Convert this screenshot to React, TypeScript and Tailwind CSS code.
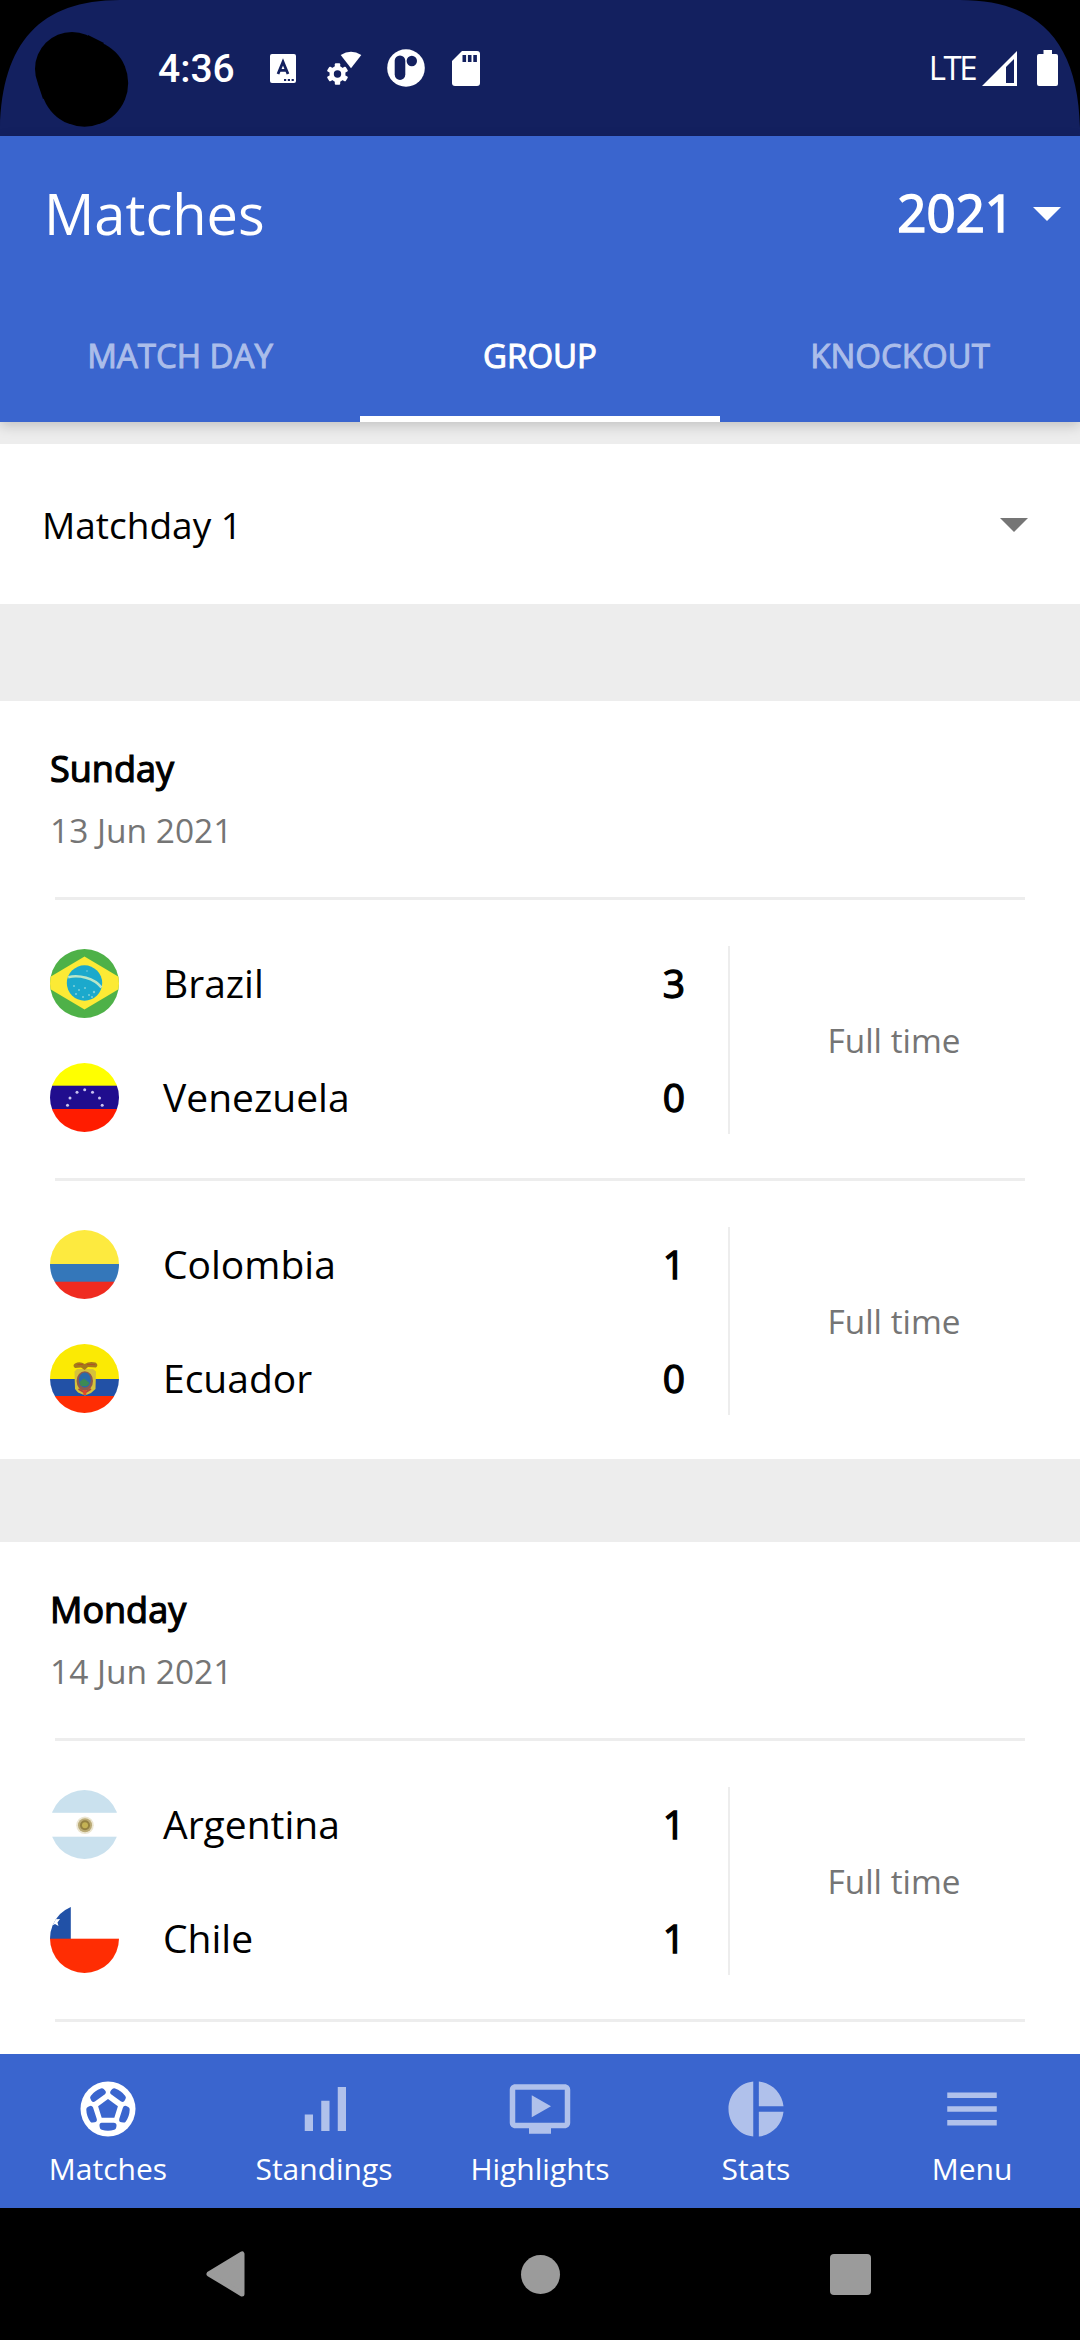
import React, { useState } from 'react'

type FlagName = 'brazil' | 'venezuela' | 'colombia' | 'ecuador' | 'argentina' | 'chile'

interface Team {
  name: string
  flag: FlagName
  score: number
}

interface Match {
  home: Team
  away: Team
  status: string
}

interface Day {
  weekday: string
  date: string
  matches: Match[]
}

const days: Day[] = [
  {
    weekday: 'Sunday',
    date: '13 Jun 2021',
    matches: [
      {
        home: { name: 'Brazil', flag: 'brazil', score: 3 },
        away: { name: 'Venezuela', flag: 'venezuela', score: 0 },
        status: 'Full time',
      },
      {
        home: { name: 'Colombia', flag: 'colombia', score: 1 },
        away: { name: 'Ecuador', flag: 'ecuador', score: 0 },
        status: 'Full time',
      },
    ],
  },
  {
    weekday: 'Monday',
    date: '14 Jun 2021',
    matches: [
      {
        home: { name: 'Argentina', flag: 'argentina', score: 1 },
        away: { name: 'Chile', flag: 'chile', score: 1 },
        status: 'Full time',
      },
    ],
  },
]

const flagArt: Record<FlagName, React.ReactNode> = {
  brazil: (
    <>
      <rect width="69" height="69" fill="#4eb148" />
      <path d="M34.5 7.5 79 34 34.5 60.5 -10 34Z" fill="#fcea35" />
      <circle cx="34.5" cy="34" r="17.7" fill="#1ba9cc" />
      <path d="M18.2 28.2C29 25.5 44 29 51.5 38.5" fill="none" stroke="#b9e6c8" strokeWidth="2.6" />
      <g fill="#7fd0da">
        <circle cx="24" cy="37" r="1" />
        <circle cx="29" cy="41" r="1" />
        <circle cx="26" cy="45" r="1" />
        <circle cx="35" cy="39" r="1" />
        <circle cx="39" cy="46" r="1" />
        <circle cx="44" cy="43" r="1.2" />
        <circle cx="42" cy="48" r="1" />
        <circle cx="33" cy="48" r="1" />
        <circle cx="37" cy="22" r=".8" />
      </g>
    </>
  ),
  venezuela: (
    <>
      <rect width="69" height="23" fill="#ffff00" />
      <rect y="22.7" width="69" height="23.5" fill="#200d8e" />
      <rect y="46" width="69" height="23" fill="#ff1c00" />
      <g fill="#c9c3ee">
        <circle cx="17.5" cy="42.3" r="1.5" />
        <circle cx="20" cy="35" r="1.5" />
        <circle cx="27" cy="29.3" r="1.5" />
        <circle cx="34.7" cy="26.7" r="1.5" />
        <circle cx="42.5" cy="29.3" r="1.5" />
        <circle cx="49.5" cy="35" r="1.5" />
        <circle cx="52.2" cy="42.3" r="1.5" />
      </g>
    </>
  ),
  colombia: (
    <>
      <rect width="69" height="34" fill="#fdea3f" />
      <rect y="34" width="69" height="18" fill="#3477ba" />
      <rect y="51.7" width="69" height="18" fill="#ef2b20" />
    </>
  ),
  ecuador: (
    <>
      <rect width="69" height="35" fill="#fbea04" />
      <rect y="35" width="69" height="17.5" fill="#2251a6" />
      <rect y="52" width="69" height="17" fill="#ff2d03" />
      <path d="M24.5 27.5 27 25H43L46 27.5 45.5 45 41 49 35 51.5 28 48.5 25 45Z" fill="#d5c23a" />
      <path d="M25 19.5Q30 17 34.7 20Q39 17 45.5 18.5Q49 21 46 23.5L38 23 34.7 26 31 23.5 25 24Q22 21.5 25 19.5Z" fill="#a3791c" />
      <path d="M27.5 20.5H33M37 20.5H45" stroke="#b5531f" strokeWidth="1.2" />
      <ellipse cx="34.8" cy="37" rx="8.2" ry="9.8" fill="#8e5a4e" />
      <ellipse cx="34.8" cy="36" rx="6" ry="7.5" fill="#2b6ba8" />
      <path d="M29.5 38 34 34.5 39.5 39 37 42H31Z" fill="#3c8a55" />
      <path d="M28.5 45 34.8 48.5 41 45" fill="none" stroke="#b3483a" strokeWidth="2" />
      <path d="M34.8 46V51" stroke="#e0492a" strokeWidth="3" />
    </>
  ),
  argentina: (
    <>
      <rect width="69" height="69" fill="#fff" />
      <rect width="69" height="22.8" fill="#cae1ee" />
      <rect y="46.7" width="69" height="23" fill="#cae1ee" />
      <circle cx="35" cy="35.2" r="8.8" fill="#ece6d2" />
      <circle cx="35" cy="35.2" r="7" fill="#bbab76" />
      <circle cx="35" cy="35.2" r="5" fill="#93803f" />
      <circle cx="35" cy="35.2" r="3" fill="#c4b254" />
    </>
  ),
  chile: (
    <>
      <rect width="69" height="69" fill="#fff" />
      <rect width="20.8" height="35" fill="#2151a7" />
      <path d="M5.5 12 6.5 15.2 10 15 7.5 18.5 8.5 22 5 20 1.5 22 2 17.5 -1 15H3.5Z" fill="#fff" />
      <rect y="34.7" width="69" height="35" fill="#ff2d03" />
    </>
  ),
}

const Flag: React.FC<{ name: FlagName }> = ({ name }) => (
  <div className="h-[69px] w-[69px] shrink-0 overflow-hidden rounded-full">
    <svg viewBox="0 0 69 69" className="h-full w-full">{flagArt[name]}</svg>
  </div>
)

// Material style icons, all on the 24 unit grid
const SoccerIcon = () => (
  <svg viewBox="-12 -12 24 24" className="h-[66px] w-[66px] text-white">
    <circle r="10" fill="currentColor" />
    <path d="M0 -3.6 3.6 -1 2.3 3.2H-2.3L-3.6 -1Z" fill="#3a65ce" />
    {[0, 72, 144, 216, 288].map((angle) => (
      <path
        key={angle}
        transform={`rotate(${angle})`}
        d="M-2.1 6H2.1L2 6.6Q0 7.2 -2 6.6Z"
        fill="#3a65ce"
        stroke="#3a65ce"
        strokeWidth="2"
        strokeLinejoin="round"
      />
    ))}
  </svg>
)

const NavIcon: React.FC<{ d: string }> = ({ d }) => (
  <svg viewBox="0 0 24 24" className="h-[66px] w-[66px] text-[#b0c1eb]">
    <path d={d} fill="currentColor" />
  </svg>
)

const navItems = [
  { label: 'Matches', icon: <SoccerIcon /> },
  { label: 'Standings', icon: <NavIcon d="M17 4h3v16h-3zM5 14h3v6H5zm6-5h3v11h-3z" /> },
  {
    label: 'Highlights',
    icon: (
      <NavIcon d="M21 3H3c-1.11 0-2 .89-2 2v12c0 1.1.89 2 2 2h5v2h8v-2h5c1.1 0 1.99-.9 1.99-2L23 5c0-1.11-.9-2-2-2zm0 14H3V5h18v12zm-5-6l-7 4V7z" />
    ),
  },
  {
    label: 'Stats',
    icon: (
      <NavIcon d="M11 2v20c-5.07-.5-9-4.79-9-10s3.93-9.5 9-10zm2.03 0v8.99H22c-.47-4.74-4.24-8.52-8.97-8.99zm0 11.01V22c4.74-.47 8.5-4.25 8.97-8.99h-8.97z" />
    ),
  },
  { label: 'Menu', icon: <NavIcon d="M3 18h18v-2H3v2zm0-5h18v-2H3v2zm0-7v2h18V6H3z" /> },
]

const StatusBar = () => (
  <div className="relative flex h-[136px] items-center bg-[#13205f] pl-[158px] pr-[22px] text-white">
    {/* rounded display corners and camera cutout */}
    <svg viewBox="0 0 1080 136" className="absolute inset-0 h-full w-full">
      <path d="M0 0H120C40 0 2 43 0 128Z" />
      <path d="M1080 0H960C1040 0 1078 43 1080 128Z" />
      <circle cx="72" cy="69" r="37" />
      <circle cx="84.5" cy="83" r="43.7" />
      <path d="M88 35 104 43 90 60ZM38 84 43 99 60 90Z" />
    </svg>

    <span className="w-[112px] pt-0.5 font-['Roboto'] text-[39px] font-medium leading-[50px]">4:36</span>

    <svg viewBox="0 0 26 29" className="h-[29px] w-[26px]">
      <rect width="26" height="29" rx="2" fill="#fff" />
      <path d="M8 20 13 8 18 20M9.8 16.3H16.2" fill="none" stroke="#13205f" strokeWidth="2.8" />
      <path d="M14 25h2.2v2H14zM17.8 25h2.2v2h-2.2zM21.6 25h2.2v2h-2.2z" fill="#13205f" />
    </svg>

    <svg viewBox="0 0 36 36" className="ml-[31px] h-9 w-9">
      <path d="M13.7 5Q24 -1.5 34.3 5L24 18.3Z" fill="#fff" />
      <g transform="translate(10.5 24)">
        <circle r="8" fill="#fff" />
        {[0, 60, 120].map((angle) => (
          <rect key={angle} x="-2.7" y="-10.7" width="5.4" height="21.4" rx="1" fill="#fff" transform={`rotate(${angle})`} />
        ))}
        <circle r="3.7" fill="#13205f" />
      </g>
    </svg>

    <svg viewBox="0 0 38 38" className="ml-6 h-[38px] w-[38px]">
      <circle cx="19" cy="19" r="18.8" fill="#fff" />
      <rect x="7.7" y="6.4" width="10.6" height="24.5" rx="5.3" fill="#13205f" />
      <circle cx="24.8" cy="12" r="5.2" fill="#13205f" />
    </svg>

    <svg viewBox="0 0 28 35" className="ml-[27px] h-[35px] w-7">
      <path d="M10 0H25a3 3 0 0 1 3 3V32a3 3 0 0 1-3 3H3a3 3 0 0 1-3-3V10Z" fill="#fff" />
      <path d="M10.5 4h3.6v7h-3.6zM15.9 4h3.6v7h-3.6zM21.3 4h3.6v7h-3.6z" fill="#13205f" />
    </svg>

    <span className="ml-auto text-[33px] leading-[40px] tracking-[-2.5px]">LTE</span>
    <svg viewBox="0 0 35 35" className="ml-[7px] h-[35px] w-[35px]">
      <path d="M35 0V35H0ZM32 8 24 16V32H32Z" fill="#fff" fillRule="evenodd" />
    </svg>
    <svg viewBox="0 0 21 36" className="ml-5 h-9 w-[21px]">
      <path d="M6.5 0H15V4H19a2 2 0 0 1 2 2V34a2 2 0 0 1-2 2H2a2 2 0 0 1-2-2V6a2 2 0 0 1 2-2H6.5Z" fill="#fff" />
    </svg>
  </div>
)

const tabs = ['MATCH DAY', 'GROUP', 'KNOCKOUT']

const TeamRow: React.FC<{ team: Team }> = ({ team }) => (
  <div className="flex h-[69px] items-center">
    <Flag name={team.flag} />
    <span className="ml-[44px] pb-[2px] text-[39px] leading-[50px] text-black">{team.name}</span>
    <span className="ml-auto w-6 pb-[2px] text-center text-[39px] leading-[50px] text-black [-webkit-text-stroke:1.3px_black]">
      {team.score}
    </span>
  </div>
)

const MatchCard: React.FC<{ match: Match }> = ({ match }) => (
  <>
    <div className="mx-[55px] h-[3px] bg-[#ededed]" />
    <div className="flex h-[278px] pb-11 pl-[50px] pr-[22px] pt-[46px]">
      <div className="flex w-[678px] flex-col gap-[45px] pr-[42px] pt-[3px]">
        <TeamRow team={match.home} />
        <TeamRow team={match.away} />
      </div>
      <div className="flex flex-1 items-center justify-center border-l-2 border-[#ededed] pt-0.5 text-[33.3px] text-[#757575]">
        {match.status}
      </div>
    </div>
  </>
)

const DaySection: React.FC<{ day: Day }> = ({ day }) => (
  <section className="bg-white">
    <header className="px-[50px] pb-[42px] pt-[43px]">
      <h2 className="text-[36px] leading-[50px] text-black [-webkit-text-stroke:1.2px_black]">{day.weekday}</h2>
      <p className="mt-[11px] text-[33.5px] leading-[50px] text-[#757575]">{day.date}</p>
    </header>
    {day.matches.map((match) => (
      <MatchCard key={match.home.name} match={match} />
    ))}
  </section>
)

function App() {
  const [activeTab, setActiveTab] = useState('GROUP')

  return (
    <div className="flex h-[2340px] w-[1080px] flex-col overflow-hidden bg-[#ededed] font-['Open_Sans','Noto_Sans',sans-serif]">
      <StatusBar />

      <header className="relative z-10 bg-[#3a65ce] text-white shadow-[0_4px_12px_rgba(0,0,0,0.18)]">
        <div className="flex h-[152px] items-center pl-[44px] pr-[19px]">
          <h1 className="pt-0.5 text-[56px] leading-[76px]">Matches</h1>
          <button className="ml-auto flex items-center text-[51px] leading-[76px] [-webkit-text-stroke:1.6px_white]">
            2021
            <svg viewBox="0 0 28 14" className="ml-[19px] mt-1 h-3.5 w-7">
              <path d="M0 0H28L14 14Z" fill="currentColor" />
            </svg>
          </button>
        </div>
        <nav className="grid h-[134px] grid-cols-3">
          {tabs.map((tab) => (
            <button
              key={tab}
              onClick={() => setActiveTab(tab)}
              className={
                tab === activeTab
                  ? 'border-b-[6px] border-white pt-2 text-[33px] text-white [-webkit-text-stroke:1px_white]'
                  : 'border-b-[6px] border-transparent pt-2 text-[33px] text-[#abbdea] [-webkit-text-stroke:1px_#abbdea]'
              }
            >
              {tab}
            </button>
          ))}
        </nav>
      </header>

      <main className="min-h-0 flex-1 overflow-hidden">
        <button className="mt-[22px] flex h-[160px] w-full items-center justify-between bg-white pl-[42px] pr-[52px] pt-0.5 text-[37px] text-black">
          Matchday 1
          <svg viewBox="0 0 28 14" className="h-3.5 w-7">
            <path d="M0 0H28L14 14Z" fill="#757575" />
          </svg>
        </button>
        <div className="mt-[97px] flex flex-col gap-[83px]">
          {days.map((day) => (
            <DaySection key={day.weekday} day={day} />
          ))}
        </div>
        <div className="bg-white">
          <div className="mx-[55px] h-[3px] bg-[#ededed]" />
          <div className="h-20" />
        </div>
      </main>

      <nav className="grid h-[154px] grid-cols-5 bg-[#3a65ce] text-white">
        {navItems.map((item) => (
          <button key={item.label} className="flex flex-col items-center pt-[22px]">
            {item.icon}
            <span className="mt-1.5 text-[30px] leading-[42px]">{item.label}</span>
          </button>
        ))}
      </nav>

      {/* system navigation */}
      <div className="flex h-[132px] items-center bg-black">
        <svg viewBox="0 0 39 46" className="ml-[206px] h-[46px] w-[39px]">
          <path d="M3 23 36 3V43Z" fill="#9b9b9b" stroke="#9b9b9b" strokeWidth="5" strokeLinejoin="round" />
        </svg>
        <div className="ml-[276px] h-[39px] w-[39px] rounded-full bg-[#9b9b9b]" />
        <div className="ml-[270px] h-[41px] w-[41px] rounded-[4px] bg-[#9b9b9b]" />
      </div>
    </div>
  )
}

export default App
